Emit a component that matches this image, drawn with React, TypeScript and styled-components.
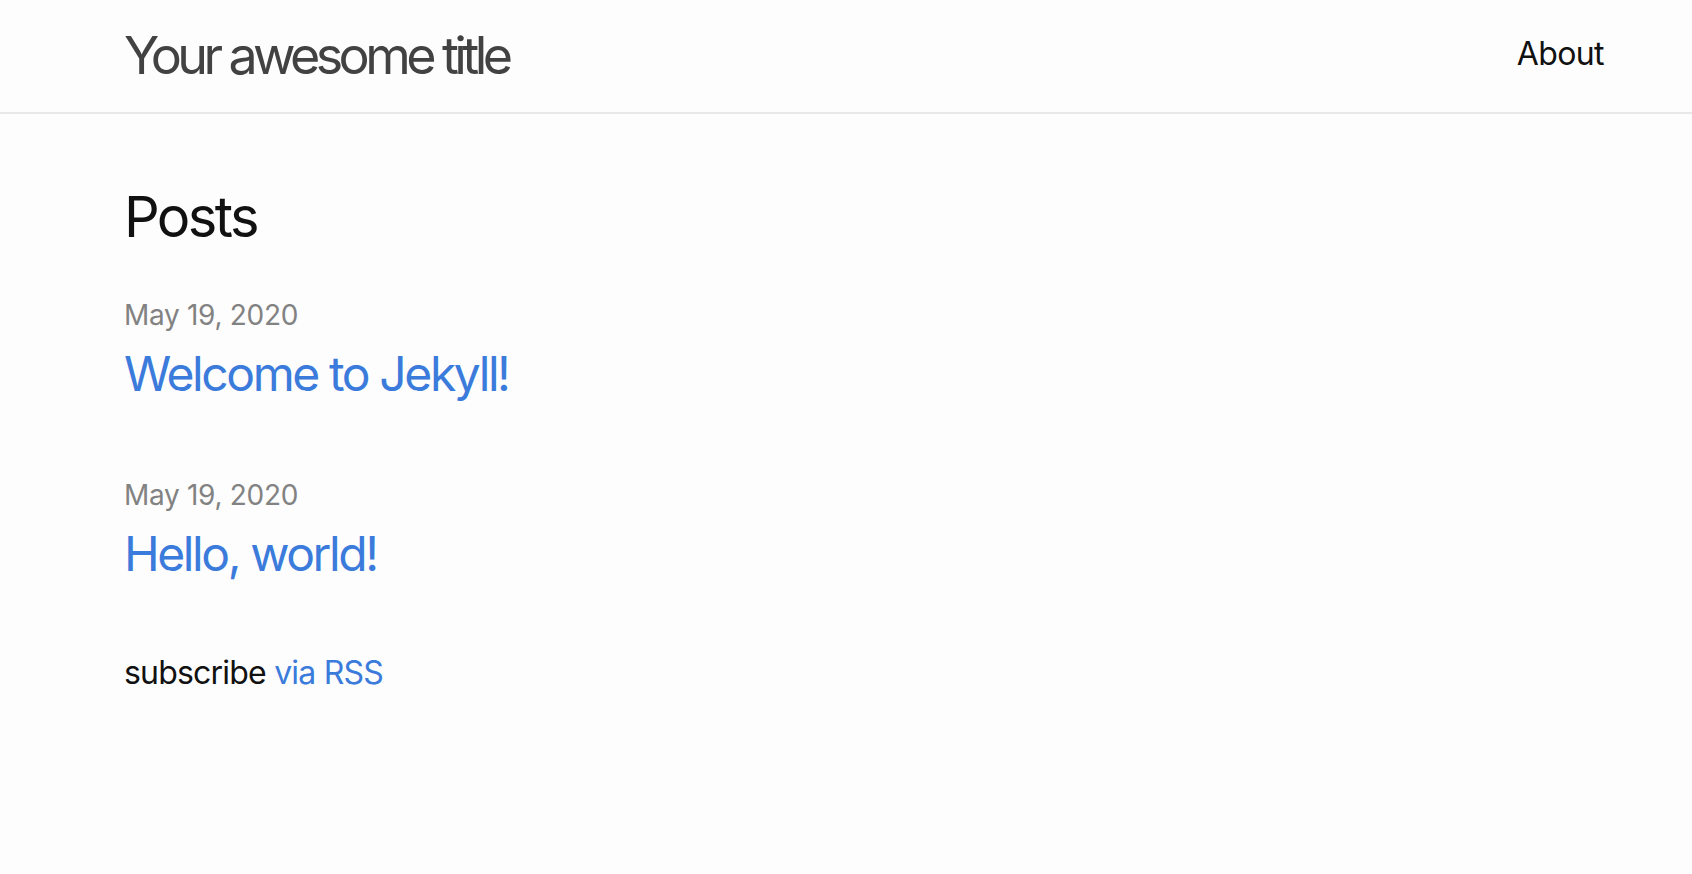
import React from "react";
import styled, { createGlobalStyle } from "styled-components";

const GlobalStyle = createGlobalStyle`
  body {
    margin: 0;
    background-color: #fdfdfd;
    color: #111111;
    font-family: Inter, "Noto Sans", "Liberation Sans", sans-serif;
  }
`;

const posts = [
    { date: "May 19, 2020", title: "Welcome to Jekyll!" },
    { date: "May 19, 2020", title: "Hello, world!" },
];

export default function App() {
    return (
        <>
            <GlobalStyle />
            <SiteHeader>
                <Wrapper>
                    <HeaderRow>
                        <SiteTitle href="#">Your awesome title</SiteTitle>
                        <NavLink href="#">About</NavLink>
                    </HeaderRow>
                </Wrapper>
            </SiteHeader>

            <Main>
                <Wrapper>
                    <Heading>Posts</Heading>
                    <PostList>
                        {posts.map((post) => (
                            <PostItem key={post.title}>
                                <PostMeta>{post.date}</PostMeta>
                                <PostLink href="#">{post.title}</PostLink>
                            </PostItem>
                        ))}
                    </PostList>
                    <Subscribe>
                        subscribe <InlineLink href="#">via RSS</InlineLink>
                    </Subscribe>
                </Wrapper>
            </Main>
        </>
    );
}

const SiteHeader = styled.header`
  min-height: 114px;
  border-bottom: 2px solid #e8e8e8;
  box-sizing: border-box;
`;

const Wrapper = styled.div`
  padding: 0 88px 0 124px;
`;

const HeaderRow = styled.div`
  display: flex;
  justify-content: space-between;
  align-items: flex-start;
  padding-top: 24px;
`;

const SiteTitle = styled.a`
  font-size: 52px;
  line-height: 64px;
  font-weight: 400;
  letter-spacing: -4.6px;
  color: #424242;
  text-decoration: none;
`;

const NavLink = styled.a`
  margin-top: 6px;
  font-size: 32px;
  line-height: 48px;
  letter-spacing: -0.6px;
  color: #111111;
  text-decoration: none;
`;

const Main = styled.main`
  padding-top: 65px;
`;

const Heading = styled.h2`
  margin: 0 0 39px;
  font-size: 56px;
  line-height: 76px;
  font-weight: 400;
  letter-spacing: -2.6px;
  color: #111111;
`;

const PostList = styled.ul`
  list-style: none;
  margin: 0;
  padding: 0;
  display: flex;
  flex-direction: column;
  gap: 70px;
`;

const PostItem = styled.li`
  display: flex;
  flex-direction: column;
  gap: 8px;
`;

const PostMeta = styled.span`
  font-size: 28px;
  line-height: 42px;
  letter-spacing: -0.3px;
  color: #828282;
`;

const PostLink = styled.a`
  font-size: 48px;
  line-height: 60px;
  letter-spacing: -2.4px;
  color: #3b7bdb;
  text-decoration: none;
`;

const Subscribe = styled.p`
  margin: 65px 0 0;
  font-size: 32px;
  line-height: 48px;
  letter-spacing: -0.8px;
  color: #111111;
`;

const InlineLink = styled.a`
  color: #3b7bdb;
  text-decoration: none;
`;
